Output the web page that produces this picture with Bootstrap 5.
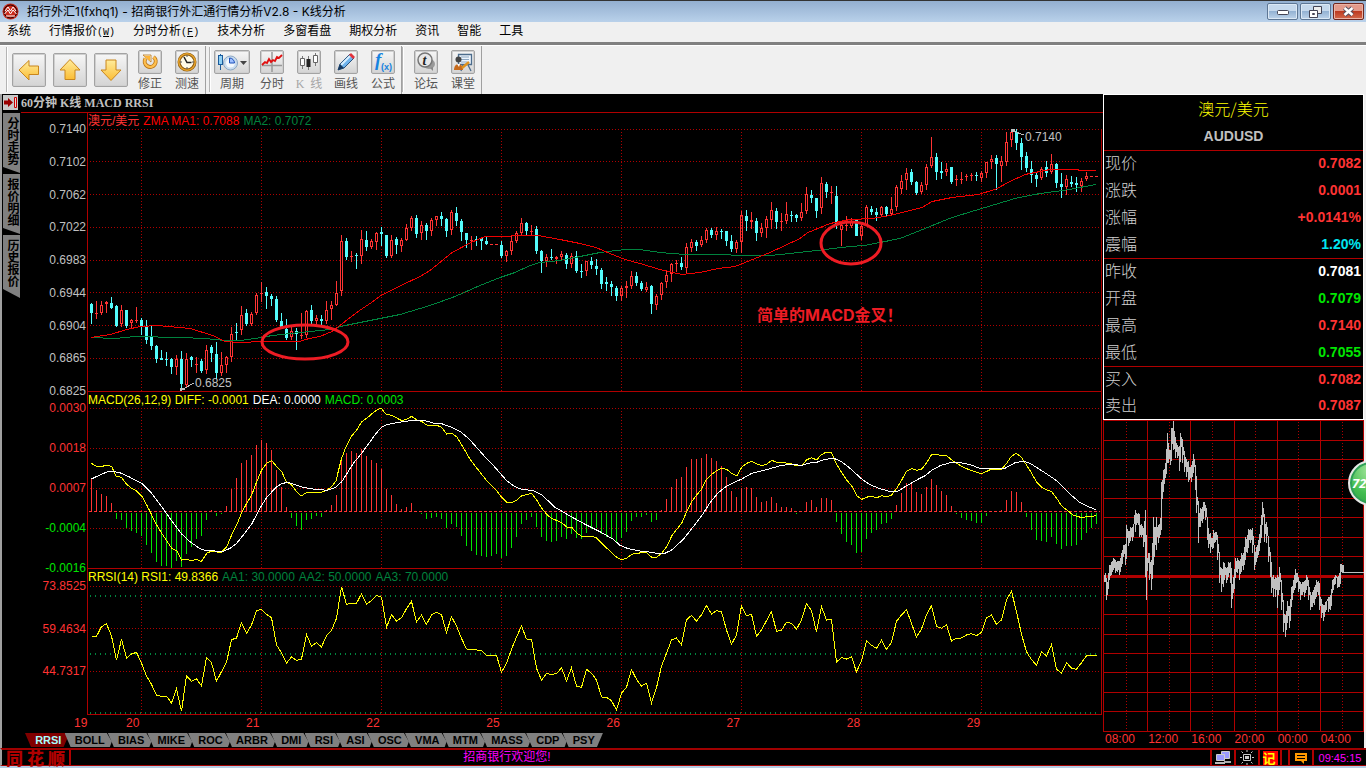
<!DOCTYPE html>
<html lang="zh-CN">
<head>
<meta charset="utf-8">
<meta name="viewport" content="width=device-width, initial-scale=1">
<title>招商银行外汇通行情分析V2.8 - K线分析</title>
<link href="https://cdn.jsdelivr.net/npm/bootstrap@5.3.0/dist/css/bootstrap.min.css" rel="stylesheet">
<style>
:root{--line:#b00000;--up:#ff3333;--down:#54fcfc;--silver:#c0c0c0}
body{height:100vh;min-height:640px;overflow:hidden;background:#f0f0f0;font:12px/14px "Liberation Sans","Noto Sans CJK SC",sans-serif;color:#000}
button{font:inherit;padding:0;border:0;background:none}
svg{display:block}
.titlebar{height:22px;padding:0 2px 0 2px;border-top:1px solid #333;background:linear-gradient(#93afd0,#b9d1ea);font-family:Inter,"Noto Sans CJK SC",sans-serif}
.winbtn{width:31px;height:17px;border:1px solid #5d7694;border-radius:2px;background:linear-gradient(#c5d8ec 45%,#94b2d3 50%,#bdd3ea);box-shadow:inset 0 0 0 1px #dbe8f5;display:grid;place-items:center}
.winclose{border-color:#70271f;background:linear-gradient(#e39a8b 45%,#bd3b22 50%,#d3694c);box-shadow:inset 0 0 0 1px #eab3a6}
.menubar{height:20px;padding-left:7px;gap:18px;line-height:18px;font-family:"Liberation Sans","Noto Sans CJK SC",sans-serif}
.menubar a{color:#000;text-decoration:none}
.hotkey{font:10px/18px "Liberation Mono",monospace}
.toolbar{height:52px;border-top:3px solid #808080;box-shadow:inset 0 1px #fff;padding-left:2px}
.tgroup{border-right:1px solid #a0a0a0;margin-top:1px}
.grip{width:2px;background:#b4b4b4;margin:1px 3px 2px 3px;border-right:1px solid #fff}
.arrows{gap:7px;margin-left:1px}
.arrowbtn{width:34px;height:34px}
.arrowbtn,.tbox{border:1px solid #a3a3a3;border-radius:2px;background:linear-gradient(#f6f6f6,#d4d4d4);box-shadow:inset 0 0 0 1px #cfcfcf;display:grid;place-items:center}
.tool{width:36px;padding-top:4px;color:#555;line-height:20px;display:flex;flex-direction:column;align-items:center}
.tbox{width:24px;height:24px}
.tbox.wide{width:36px}
.tool[disabled]{color:#a6a6a6}
.near{margin-left:1px}
.workspace{min-height:0;border-left:2px solid #a0a0a0;border-right:2px solid #f0f0f0}
.kpane{background:#000;min-width:0}
.ktitle{height:19px;padding-left:1px;gap:3px;color:var(--silver);font:bold 12px/16px "Liberation Serif","Noto Sans CJK SC",serif}
.ktitle h1{font:inherit;margin:0;border-bottom:1px solid var(--line);height:19px;line-height:18px}
.pinbtn{width:15px;height:15px;background:#c8c8c8;margin-top:1px}
.sidetabs{width:18px;padding-left:1px;gap:1px}
.vtab{width:17px;height:60px;background:#808080;color:#000;font-weight:bold;writing-mode:vertical-rl;line-height:17px;padding-top:4px;text-align:left;clip-path:polygon(0 0,100% 0,100% 100%,0 calc(100% - 6px))}
.vtab.long{height:63px;clip-path:polygon(0 0,100% 0,100% 100%,0 calc(100% - 9px))}
.axis{width:67px;padding:9px 1px 0 0;text-align:right;color:var(--silver)}
.axis>div{display:flex;flex-direction:column;justify-content:space-between;min-height:0}
.ax1{flex:276 1 0}.ax2{flex:174 1 0;margin-top:3px}.ax3{flex:99 1 0;margin-top:4px}.axpad{flex:37 1 0}
.t-red{color:var(--up)}.t-green{color:#00e600}.t-dark{color:#00833e}.t-yel{color:#ff0}.t-bright{color:#f00}
.panel1{flex:279 1 0}.panel2{flex:177 1 0}.panel3{flex:146 1 0}
.panel1,.panel2,.panel3{min-height:0}
.plot{width:100%;height:100%}
.plot *{vector-effect:non-scaling-stroke}
.legend-row{position:absolute;left:1px;top:1px;gap:4px;white-space:nowrap}
.canvas-note{position:absolute;white-space:nowrap;color:var(--silver)}
.canvas-note.big{color:#ed1c24;font:bold 16px/20px Inter,"Noto Sans CJK SC",sans-serif}
.dates{height:18px;padding-left:72px;display:grid;grid-template-columns:52px repeat(8,120fr) 16fr;color:var(--up);line-height:17px}
.indtabs{height:15px;width:573px;margin-left:23px}
.indtabs button{flex:1 0 auto;height:14px;margin-right:-5px;padding:0 7px 0 9px;background:#808080;color:#000;font:bold 11px/15px "Liberation Sans",sans-serif;clip-path:polygon(0 0,calc(100% - 6px) 0,calc(100% - 1px) 60%,calc(100% - 3px) 100%,6px 100%)}
.indtabs button.active{background:#800000;color:#a8ffff;clip-path:polygon(0 0,100% 0,calc(100% - 6px) 100%,6px 100%)}
.indtabs button:last-child{clip-path:polygon(0 0,100% 0,calc(100% - 6px) 100%,6px 100%)}
.quotepane{width:261px;background:#000}
.quote{border:1px solid #fff}
.quote caption{caption-side:top;padding:0;height:56px;border-bottom:1px solid var(--line);color:#ff0;text-align:center;font:300 16px/27px "Noto Sans CJK SC",sans-serif}
.quote caption small{display:block;color:var(--silver);font:bold 14px/28px "Liberation Sans",sans-serif}
.quote table{width:100%;border-collapse:separate;border-spacing:0}
.quote th{height:27px;padding:0 0 0 1px;vertical-align:top;font:300 16px/23px "Noto Sans CJK SC",sans-serif;color:#d0d0d0}
.quote td{padding:0 2px 0 0;vertical-align:top;text-align:right;font:bold 14px/24px "Liberation Sans",sans-serif}
.quote tbody tr:last-child>*{border-bottom:1px solid var(--line)}
.quote tbody:last-child tr>*{border:0;height:26px}
.c-cyan{color:#00e5f0}.c-white{color:#fff}
.hours{height:16px;display:grid;grid-template-columns:repeat(6,1fr);padding-left:2px;color:var(--up)}
.ball{position:absolute;top:40px;right:-30px;width:46px;height:46px;border:2px solid #e8e8e8;border-radius:50%;background:radial-gradient(circle at 50% 20%,#a9e8a0,#43bd50 60%,#2f9d45);box-shadow:inset 0 0 0 2px #2f9f58;color:#fff;font:italic bold 13px/40px "Open Sans",sans-serif;padding-left:2px;text-align:left}
.statusbar{height:18px;background:#000;border-top:2px solid #a00000;border-bottom:1px solid #a00000;border-left:2px solid #a0a0a0}
.brand{width:69px;border-right:2px solid #b00000;color:#b00000;font:900 17px/15px "Noto Sans CJK SC",sans-serif;padding:0 4px;display:flex;justify-content:space-between}
.greet{flex:872;color:#f0f;text-align:center;line-height:15px}
.spacer{flex:267}
.cell{border-left:2px solid #b00000;display:grid;place-items:center}
.w24{width:24px}.w22{width:22px}.w8{width:8px}
.clock{width:54px;color:#f0f;font-size:11px}
.memo{width:15px;height:14px;background:#f00;color:#ff0;font:bold 13px/13px "Noto Sans CJK SC",sans-serif}
.deskedge{height:2px;background:#b4cbe4}
</style>
</head>
<body class="d-flex flex-column">
<header>
  <div class="titlebar d-flex align-items-center">
    <svg width="17" height="17" viewBox="0 0 17 17"><circle cx="8.500" cy="8.500" r="8" fill="#c92a1c"/><circle cx="8.500" cy="8.500" r="6.500" fill="none" stroke="#200" stroke-width="1"/><path d="M3 8l3-4 2.500 4L11 4l3 4M2.500 11l3.500-4 2.500 4L11 7l3.500 4M4 13h9" fill="none" stroke="#fff" stroke-width="1"/></svg>
    <span class="ps-2">招行外汇1(fxhq1) - 招商银行外汇通行情分析V2.8 - K线分析</span>
    <div class="ms-auto d-flex" style="gap:2px">
      <button class="winbtn" aria-label="最小化"><svg width="12" height="6"><rect x=".5" y="1.500" width="11" height="4" rx="1" fill="#fff" stroke="#445"/></svg></button>
      <button class="winbtn" aria-label="还原"><svg width="13" height="12"><path d="M4.500.5h8v7h-8z" fill="#eee" stroke="#445"/><path d="M.5 4.500h8v7h-8z" fill="#fff" stroke="#445"/><path d="M3.500 7.500h2v1h-2z" fill="none" stroke="#445"/></svg></button>
      <button class="winbtn winclose" aria-label="关闭"><svg width="13" height="11"><path d="M2.500 2l8 7M10.500 2l-8 7" stroke="#545060" stroke-width="4.500"/><path d="M2.500 2l8 7M10.500 2l-8 7" stroke="#fff" stroke-width="2.500"/></svg></button>
    </div>
  </div>
  <nav class="menubar d-flex">
    <a href="#">系统</a><a href="#">行情报价<span class="hotkey">(<u>W</u>)</span></a><a href="#">分时分析<span class="hotkey">(<u>F</u>)</span></a><a href="#">技术分析</a><a href="#">多窗看盘</a><a href="#">期权分析</a><a href="#">资讯</a><a href="#">智能</a><a href="#">工具</a>
  </nav>
</header>
<svg width="0" height="0" class="position-absolute"><defs><linearGradient id="gold" x1="0" y1="0" x2="0" y2="1"><stop offset="0" stop-color="#ffec9c"/><stop offset="1" stop-color="#fbbd35"/></linearGradient></defs></svg>
<div class="toolbar d-flex" role="toolbar">
  <div class="tgroup d-flex">
    <div class="grip ms-1"></div>
    <div class="arrows d-flex align-items-center">
      <button class="arrowbtn" aria-label="后退"><svg width="24" height="24" viewBox="0 0 24 24"><path d="M2 12L12 2.500V8h9.500v8.500H12V22z" fill="url(#gold)" stroke="#c9861d"/></svg></button>
      <button class="arrowbtn" aria-label="向上"><svg width="24" height="24" viewBox="0 0 24 24"><path d="M12 1.500L22 12h-5v9.500H7V12H2z" fill="url(#gold)" stroke="#c9861d"/></svg></button>
      <button class="arrowbtn" aria-label="向下"><svg width="24" height="24" viewBox="0 0 24 24"><path d="M12 22.500L2 12h5V2h10v10h5z" fill="url(#gold)" stroke="#c9861d"/></svg></button>
    </div>
    <button class="tool ms-1"><span class="tbox"><svg width="18" height="18" viewBox="0 0 18 18"><path d="M4.500 5.500a5.500 5.500 0 1 0 8-1.500" fill="none" stroke="#b9761c" stroke-width="4"/><path d="M2 2h8v7z" fill="#fff3d0" stroke="#b9761c" stroke-width=".8"/><path d="M4.500 5.500a5.500 5.500 0 1 0 8-1.500" fill="none" stroke="#ffc04e" stroke-width="2.400"/><path d="M3 3h6v5z" fill="#ffb535"/></svg></span>修正</button>
    <button class="tool near"><span class="tbox"><svg width="20" height="20" viewBox="0 0 20 20"><circle cx="10" cy="10" r="8" fill="#fffbe8" stroke="#8c5a10" stroke-width="3"/><circle cx="10" cy="10" r="8.200" fill="none" stroke="#e8a52c" stroke-width="1.500"/><path d="M7 5l3 5.500h4.500" fill="none" stroke="#222" stroke-width="1.500"/><path d="M10 3v2M10 15v2M3 10h2M15 10h2" stroke="#555"/></svg></span>测速</button>
  </div>
  <div class="tgroup d-flex">
    <div class="grip"></div>
    <button class="tool"><span class="tbox wide"><svg width="32" height="20" viewBox="0 0 32 20"><path d="M4.500 2v16" stroke="#1c5c9c"/><rect x="2.500" y="3.500" width="4" height="9" fill="#8fd0f4" stroke="#1c5c9c"/><circle cx="14.500" cy="11" r="7" fill="#c9dcee" stroke="#8ba6c2"/><circle cx="14.500" cy="11" r="4.500" fill="#f3f8fd"/><path d="M13.500 11V6a5 5 0 0 1 5 5z" fill="#9ec0ff" stroke="#1d50b8"/><path d="M24 9h7l-3.500 4z" fill="#444"/></svg></span>周期</button>
    <button class="tool ms-1"><span class="tbox"><svg width="22" height="22" viewBox="0 0 22 22"><path d="M11 1v20M1 14.500h20" stroke="#999" stroke-width="1.500"/><path d="M1 14l3-3 2 1 2-4 2 3 2-2 2 1 2-4 2 1 3-3" fill="none" stroke="#e01010" stroke-width="1.800"/></svg></span>分时</button>
    <button class="tool near" disabled><span class="tbox"><svg width="20" height="20" viewBox="0 0 20 20"><path d="M3.500 4v13M9.500 4v14M16.500 1v13" stroke="#777"/><path d="M1.500 6.500h4v7h-4zM14.500 3.500h4v7h-4z" fill="#fff" stroke="#666"/><path d="M7.500 7h4v8h-4z" fill="#222"/></svg></span><span style="font-family:'Liberation Serif','Noto Sans CJK SC',serif">K&nbsp; 线</span></button>
    <button class="tool near"><span class="tbox"><svg width="20" height="20" viewBox="0 0 20 20"><path d="M2 18l2-6L14 2l4 4L8 16z" fill="#6fb4ee" stroke="#28517c"/><path d="M5 13L15 3" stroke="#d7efff" stroke-width="2"/><path d="M13 3l2-2 4 4-2 2z" fill="#e2323c"/><path d="M2 18l2-6 4 4z" fill="#16395f"/></svg></span>画线</button>
    <button class="tool near"><span class="tbox"><svg width="22" height="22" viewBox="0 0 22 22"><text x="3" y="15" font-family="Liberation Serif" font-style="italic" font-weight="bold" font-size="19" fill="#1683e0">f</text><text x="9" y="19" font-family="Liberation Sans" font-weight="bold" font-size="9" fill="#1683e0">(x)</text></svg></span>公式</button>
  </div>
  <div class="tgroup d-flex">
    <div class="grip ms-0 me-0"></div>
    <button class="tool ms-1"><span class="tbox"><svg width="20" height="20" viewBox="0 0 20 20"><ellipse cx="13" cy="12" rx="6" ry="5" fill="#999"/><path d="M14 16l3 3v-4z" fill="#888"/><circle cx="9" cy="8" r="7" fill="#e8e8e8" stroke="#777" stroke-width="1.500"/><text x="6.500" y="13" font-family="Liberation Serif" font-style="italic" font-weight="bold" font-size="14" fill="#222">t</text></svg></span>论坛</button>
    <button class="tool near"><span class="tbox"><svg width="20" height="20" viewBox="0 0 20 20"><path d="M5.500 2.500h13v10h-13zM10 13l-2 6M15 13l3 6" fill="#edf4fc" stroke="#4c6c8c" stroke-width="1.300"/><path d="M8 5h8M8 7.500h8M8 10h6" stroke="#8ca6c0"/><circle cx="5.500" cy="7.500" r="3" fill="#444"/><path d="M1 18c0-8 9-8 9 0z" fill="#c66a1c"/><path d="M4 12l2 3 1-3z" fill="#fff"/><path d="M9 16l7-6" stroke="#e0931e" stroke-width="2.500"/></svg></span>课堂</button>
  </div>
</div>

<main class="workspace d-flex flex-grow-1">
  <section class="kpane d-flex flex-column flex-grow-1">
    <div class="ktitle d-flex">
      <button class="pinbtn" aria-label="隐藏侧栏"><svg width="15" height="15" viewBox="0 0 15 15"><path d="M1 5.500h4V3l5 4.500L5 12V9.500H1z" fill="#900"/><path d="M11.500 2.500h2v10h-2z" fill="#ddd" stroke="#c00"/></svg></button>
      <h1 class="flex-grow-1">60分钟 K线 MACD RRSI</h1>
    </div>
    <div class="d-flex flex-grow-1" style="min-height:0">
      <div class="sidetabs d-flex flex-column">
        <button class="vtab">分时走势</button><button class="vtab">报价明细</button><button class="vtab long">历史报价</button>
      </div>
      <div class="axis d-flex flex-column">
        <div class="ax1"><span>0.7140</span><span>0.7102</span><span>0.7062</span><span>0.7022</span><span>0.6983</span><span>0.6944</span><span>0.6904</span><span>0.6865</span><span>0.6825</span></div>
        <div class="ax2 t-red"><span>0.0030</span><span>0.0018</span><span>0.0007</span><span class="t-green">-0.0004</span><span class="t-green">-0.0016</span></div>
        <div class="ax3 t-red"><span>73.8525</span><span>59.4634</span><span>44.7317</span></div>
        <div class="axpad"></div>
      </div>
      <div class="d-flex flex-column flex-grow-1" style="min-width:0">
        <div class="panel1 position-relative" id="candles">
          <svg class="plot" viewBox="87 113 1016 279" preserveAspectRatio="none"></svg>
          <div class="legend-row d-flex"><span class="t-red">澳元/美元</span><span class="t-bright">ZMA MA1: 0.7088</span><span class="t-dark">MA2: 0.7072</span></div>
        </div>
        <div class="panel2 position-relative" id="macd">
          <svg class="plot" viewBox="87 392 1016 177" preserveAspectRatio="none"></svg>
          <div class="legend-row d-flex t-yel"><span>MACD(26,12,9) DIFF: -0.0001</span><span class="c-white">DEA: 0.0000</span><span class="t-green">MACD: 0.0003</span></div>
        </div>
        <div class="panel3 position-relative" id="rrsi">
          <svg class="plot" viewBox="87 569 1016 146" preserveAspectRatio="none"></svg>
          <div class="legend-row d-flex t-dark"><span class="t-yel">RRSI(14) RSI1: 49.8366</span><span>AA1: 30.0000</span><span>AA2: 50.0000</span><span>AA3: 70.0000</span></div>
        </div>
      </div>
    </div>
    <div class="dates"><span>19</span><span>20</span><span>21</span><span>22</span><span>25</span><span>26</span><span>27</span><span>28</span><span>29</span></div>
    <div class="indtabs d-flex"><button class="active">RRSI</button><button>BOLL</button><button>BIAS</button><button>MIKE</button><button>ROC</button><button>ARBR</button><button>DMI</button><button>RSI</button><button>ASI</button><button>OSC</button><button>VMA</button><button>MTM</button><button>MASS</button><button>CDP</button><button>PSY</button></div>
  </section>
  <aside class="quotepane d-flex flex-column flex-shrink-0">
    <div class="quote">
      <table>
        <caption>澳元/美元<small>AUDUSD</small></caption>
        <tbody>
          <tr><th scope="row">现价</th><td class="t-red">0.7082</td></tr>
          <tr><th scope="row">涨跌</th><td class="t-red">0.0001</td></tr>
          <tr><th scope="row">涨幅</th><td class="t-red">+0.0141%</td></tr>
          <tr><th scope="row">震幅</th><td class="c-cyan">1.20%</td></tr>
        </tbody>
        <tbody>
          <tr><th scope="row">昨收</th><td class="c-white">0.7081</td></tr>
          <tr><th scope="row">开盘</th><td class="t-green">0.7079</td></tr>
          <tr><th scope="row">最高</th><td class="t-red">0.7140</td></tr>
          <tr><th scope="row">最低</th><td class="t-green">0.7055</td></tr>
        </tbody>
        <tbody>
          <tr><th scope="row">买入</th><td class="t-red">0.7082</td></tr>
          <tr><th scope="row">卖出</th><td class="t-red">0.7087</td></tr>
        </tbody>
      </table>
    </div>
    <div class="flex-grow-1 position-relative" style="min-height:0" id="intraday">
      <svg class="plot" viewBox="1103 420 261 312" preserveAspectRatio="none"></svg>
      <button class="ball">72</button>
    </div>
    <div class="hours"><span>08:00</span><span>12:00</span><span>16:00</span><span>20:00</span><span>00:00</span><span>04:00</span></div>
  </aside>
</main>

<footer>
  <div class="statusbar d-flex">
    <div class="brand"><span>同</span><span>花</span><span>顺</span></div>
    <div class="greet">招商银行欢迎您!</div>
    <div class="spacer"></div>
    <div class="cell w24"><svg width="16" height="14" viewBox="0 0 16 14"><path d="M6.500.5h8v7h-8z" fill="#99f" stroke="#ccc"/><path d="M9 10h7v2H9z" fill="#aaa"/><path d="M1.500 3.500h8v6h-8z" fill="#99f" stroke="#ccc"/><path d="M0 11h10v2H0z" fill="#bbb"/></svg></div>
    <div class="cell w24"><svg width="16" height="15" viewBox="0 0 16 15"><path d="M4.500 4.500h7v6h-7z" fill="none" stroke="#ccc"/><path d="M6 6h4v3H6z" fill="#ccc"/><path d="M8 0v2M8 13v2M1 7.500h2M13 7.500h2M2.500 1.500L4 3M13.500 1.500L12 3M2.500 13.500L4 12M13.500 13.500L12 12" stroke="#ccc"/></svg></div>
    <div class="cell w22"><span class="memo">记</span></div>
    <div class="cell w8"></div>
    <div class="cell w24"><svg width="12" height="12" viewBox="0 0 12 12"><path d="M0 1h12v8H9v3L6 9H0z" fill="#f90"/><path d="M2 3.500h8M2 6.500h8" stroke="#000"/></svg></div>
    <div class="cell clock">09:45:15</div>
  </div>
  <div class="deskedge"></div>
</footer>

<script src="https://cdn.jsdelivr.net/npm/bootstrap@5.3.0/dist/js/bootstrap.bundle.min.js"></script>
<script>
const NS = 'http://www.w3.org/2000/svg';
const X0 = 91, STEP = 5;
const svgOf = id => document.querySelector('#' + id + ' svg');
function add(svg, tag, attrs) {
  const e = document.createElementNS(NS, tag);
  for (const k in attrs) e.setAttribute(k, attrs[k]);
  svg.appendChild(e);
}
const path = (svg, d, stroke, extra) => add(svg, 'path', Object.assign({d, stroke, fill: 'none', 'shape-rendering': 'crispEdges'}, extra));
const DOT = {'stroke-dasharray': '1 2'};
const RED = '#b00000';
const nums = s => s.trim().split(/[\s,]+/).map(Number);

function frame(svg, rows, top, bottom) {
  rows.forEach(y => path(svg, `M90 ${y + .5}H1100`, RED, DOT));
  for (let x = 141; x < 1000; x += 120) path(svg, `M${x + .5} ${rows[0]}V${bottom}`, RED, DOT);
  path(svg, `M87.5 ${top}V${bottom + .5}H1101.5V${top < 129 ? 129 : top}`, RED);
}
// points are kept in thirds of a pixel, in blocks that each start with an origin
function curve(svg, blocks, stroke) {
  let d = '';
  blocks.forEach(([ox, oy, s]) => {
    const a = nums(s);
    for (let i = 0; i < a.length; i += 2) d += (d ? 'L' : 'M') + (ox + a[i] / 3).toFixed(1) + ' ' + (oy + a[i + 1] / 3).toFixed(1);
  });
  path(svg, d, stroke);
}

/* candles: direction, high, low, body top, body bottom */
const bars = `c303 324 304 313,r301 319 313 314,r301 315 305 313,r301 313 302 304,c297 309 303 308,c305 327 306 326,r305 327 310 324,c310 328 310 326,r319 328 320 323,r307 323 320 321,
c318 335 320 326,c320 344 326 340,c326 350 337 346,c345 363 346 359,c350 360 358 360,c352 366 359 360,c358 374 359 367,r355 375 359 367,c351 390 359 384,r353 387 359 385,
c356 367 357 360,r357 373 364 365,c359 373 361 371,r345 374 350 370,c345 362 347 353,c342 379 354 373,r352 376 365 373,r356 373 357 365,r327 362 334 357,c323 341 332 333,
r306 335 315 330,c309 326 313 324,r312 326 314 324,r293 315 295 313,r282 302 293 294,c287 309 292 296,c294 306 296 299,c296 322 299 320,c313 329 321 328,c319 340 329 338,
r327 340 331 337,c328 350 331 334,r313 339 335 336,r310 338 311 335,c305 324 310 321,r315 325 318 321,c315 325 319 321,r301 324 310 321,r301 320 305 309,r281 306 293 305,
r235 296 241 291,c238 260 241 257,r251 262 256 257,c253 269 255 256,r230 264 239 256,c231 251 240 247,r239 249 241 247,r232 250 233 242,c227 246 232 234,c235 258 235 256,
r235 258 240 256,c237 254 239 245,r238 252 240 246,r224 241 228 240,r216 231 218 228,c215 238 218 234,r221 240 225 233,c223 240 225 231,r218 236 220 231,r216 226 216 220,
c212 226 216 219,c218 237 219 231,r210 235 212 230,c207 226 213 221,c219 241 221 232,c233 248 233 240,r236 250 240 241,c236 246 239 240,c237 250 238 241,c236 245 241 244,
r244 245 244 245,r244 245 244 245,c241 258 245 256,r250 262 251 256,r236 255 241 251,r231 243 233 241,r218 235 223 233,c222 236 223 231,r225 236 231 232,c226 254 229 251,
c250 273 251 261,r254 267 257 261,c249 260 257 258,r256 264 257 259,r251 261 254 257,c253 269 255 264,r253 268 256 264,c251 273 256 271,c264 278 271 272,r261 276 261 271,
c257 269 261 265,c259 275 266 269,c268 289 270 284,c277 291 282 284,c281 296 284 287,c286 301 288 296,r286 301 288 296,r281 298 286 288,r271 289 276 286,c272 286 276 283,
c281 291 283 289,r282 292 287 290,c285 314 286 304,r294 310 296 305,r282 300 283 295,r271 288 275 282,r263 282 264 274,r260 272 263 264,c257 270 263 267,r243 273 247 268,
r239 252 242 248,c240 251 242 246,r236 247 240 245,r228 243 230 240,c228 238 230 235,r227 240 231 235,c229 239 231 232,c231 246 231 241,c235 252 241 249,r240 253 242 249,
r211 253 215 242,c210 231 216 221,r212 229 220 222,c218 241 221 233,r223 237 228 233,r216 238 219 228,r202 229 210 220,c208 229 211 222,r213 231 221 222,r202 224 214 221,
c211 222 215 216,c214 222 215 218,r203 221 212 218,r187 214 194 211,c190 203 195 198,c198 218 198 211,r177 214 183 208,c182 198 184 192,r186 204 192 193,c186 229 196 225,
r222 246 225 230,r216 231 225 226,r218 228 221 226,c220 236 220 236,r223 240 226 236,r205 226 207 225,c206 215 209 212,c208 221 212 215,r206 217 207 215,c206 216 207 214,
r197 215 209 214,r185 211 187 207,r175 194 181 189,r168 190 173 180,c169 185 172 182,c181 195 182 193,r182 194 185 192,r164 190 167 185,r137 168 157 166,c153 180 157 172,
c162 179 171 173,r163 176 169 172,c167 184 167 182,r175 186 179 180,r172 184 179 180,r174 181 176 177,r173 181 175 176,c172 181 175 176,r171 182 173 178,r162 178 162 173,
r155 169 159 162,c155 190 158 164,r156 182 161 166,r132 166 142 162,r130 147 132 140,c129 150 132 143,c138 170 143 157,c152 172 156 168,c161 183 169 175,c172 187 175 179,
r167 180 169 178,c161 177 167 173,r154 174 164 172,c163 188 164 183,c173 198 184 187,r175 195 179 187,c176 187 182 184,c177 192 183 185,r178 192 181 186,r172 181 176 179,r176 177 176 177,r176 177 176 177`.split(',');

const kc = svgOf('candles');
frame(kc, [129, 161, 194, 227, 260, 292, 325, 358], 113, 391);
bars.forEach((s, i) => {
  s = s.trim();
  const up = s[0] === 'r', [h, l, t, b] = nums(s.slice(1)), x = X0 + STEP * i, col = up ? '#ff3333' : '#54fcfc';
  if (b - t <= 1) {
    path(kc, `M${x + .5} ${h}V${l}M${x - 1} ${t + .5}H${x + 2}`, col);
  } else if (up) {
    path(kc, `M${x + .5} ${h}V${t}M${x + .5} ${b}V${l}M${x - .5} ${t + .5}H${x + 1.5}V${b - .5}H${x - .5}Z`, col);
  } else {
    path(kc, `M${x + .5} ${h}V${l}`, col);
    add(kc, 'rect', {x: x - 1, y: t, width: 3, height: b - t, fill: col, 'shape-rendering': 'crispEdges'});
  }
});
const poly = (svg, s, stroke) => { const a = nums(s); let d = ''; for (let i = 0; i < a.length; i += 2) d += (i ? 'L' : 'M') + a[i] + ' ' + (a[i + 1] + .5); path(svg, d, stroke); };
poly(kc, '91 337 115 338 135 336 180 337 205 338 225 340 240 340 262 337 272 335 300 332 330 329 345 325 370 320 400 314 430 305 455 296 480 285 500 277 515 272 530 265 540 262 560 260 580 256 600 252 625 249 640 249 660 252 685 254 727 254 735 255 770 255 790 253 825 249 850 246 865 245 885 241 900 238 925 228 952 217 985 207 1015 198 1040 193 1070 189 1085 186 1096 184', '#00833e');
poly(kc, '91 337 110 334 127 329 140 326 158 325 190 328 213 335 225 341 240 342 262 341 300 341 305 339 320 336 332 331 345 321 358 311 370 303 381 295 401 285 420 276 430 270 452 252 471 242 485 236 505 236 517 235 538 235 560 239 580 243 596 247 610 253 625 259 640 263 660 269 682 274 700 272 718 268 735 266 750 260 770 252 785 245 800 238 808 232 830 223 850 219 872 218 890 215 910 210 922 207 932 201 952 197 978 194 995 189 1010 181 1025 174 1050 169 1077 169 1080 170 1096 170', '#f00000');
path(kc, 'M1013 131L1024 135M183 389L194 383', '#c0c0c0');
path(kc, 'M1011 130h4M1011 131h3M181 388v3M182 389h3', '#c0c0c0', {'stroke-width': 2});
[[305, 342, 43, 17], [851, 243, 30, 21]].forEach(([cx, cy, rx, ry]) => add(kc, 'ellipse', {cx, cy, rx, ry, fill: 'none', stroke: '#ed1c24', 'stroke-width': 3}));
[['0.7140', 1025, 130, ''], ['0.6825', 195, 376, ''], ['简单的MACD金叉！', 757, 305, 'big']].forEach(([t, x, y, c]) => {
  const n = document.createElement('span');
  n.className = 'canvas-note ' + c; n.textContent = t;
  n.style.left = (x - 87) / 10.16 + '%'; n.style.top = (y - 113) / 2.79 + '%';
  document.getElementById('candles').appendChild(n);
});

/* MACD */
const mc = svgOf('macd');
frame(mc, [408, 448, 488, 528], 392, 568);
path(mc, 'M89 511.5H1100', '#ff3333', {'stroke-dasharray': '3 2'});
const hist = nums(`267 300 312 318 339 386 389 413 422 428 437 464 488 515 527 527 533 512 530 491 470 446 437 389 361 377 369 348 297 264
220 210 195 165 150 159 180 240 292 351 383 407 419 389 386 377 380 361 345 315 214 189 183 189 178 198 210 219 237 297 315 342 358 351 339 365
369 386 383 380 386 413 401 410 437 467 482 494 497 500 497 491 503 497 473 440 401 389 380 410 440 452 455 452 440 446 431 443 446 428 416 413 431 440 443
455 443 425 392 380 380 374 395 389 361 327 291 267 261 231 207 207 204 192 204 213 228 261 303 321 294 291 294 321 336 333 321 339 351 351 354
369 365 336 330 351 324 324 330 395 431 455 464 488 485 446 428 419 401 398 386 345 309 279 282 306 312 291 267 285 303 315 348
369 383 389 392 398 398 377 365 365 361 330 303 306 336 380 419 449 452 455 440 461 476 467 467 464 449 428 413 401`);
hist.forEach((v, i) => {
  if (v === 365) return;
  const x = X0 + STEP * i + .5, y = Math.round(390 + v / 3);
  path(mc, v < 365 ? `M${x} ${y}V512` : `M${x} 513V${Math.max(y, 514)}`, v < 365 ? '#ff3333' : '#00e600');
});
curve(mc, [[80, 390, '34 220 50 229 68 229 80 225 95 230 108 258 124 262 140 283 155 295 168 302 185 318 200 345 215 375 228 402 245 430 260 452 275 475 290 482 305 510 318 508 335 512 350 508 364 515 380 490 395 483 410 486 425 486 440 470 455 435 470 405 485 368 500 340 515 315 530 275 545 240 560 220 575 212 590 230 605 245 620 277 635 285 650 305 664 318 680 307 725 307 740 300 755 290 768 272 784 208 798 170 815 138 830 120 845 95 860 85 875 72 890 60 902 55 906 57 917 72 935 76 950 84 965 92 980 88 995 79 1010 90 1025 94 1040 105 1070 106 1085 112 1100 132 1115 130 1130 140 1145 165 1160 190'],
 [470, 390, '0 208 25 240 50 272 78 300 95 322 110 337 125 338 138 332 155 317 185 310 200 330 215 355 232 375 245 385 275 398 290 411 305 412 322 430 335 439 360 439 378 442 395 460 425 488 440 502 455 509 470 504 485 493 500 490 528 487 545 502 560 502 575 490 590 470 605 438 620 418 635 400 650 365 665 335 680 315 695 297 708 270 725 253 740 242 755 235 770 238 785 250 800 258 815 232 830 220 845 214 860 222 875 227 890 222 905 211 920 217'],
 [790, 390, '0 220 15 226 38 225 50 209 65 203 80 210 92 195 108 187 124 187 138 220 155 248 170 270 188 292 200 317 215 328 240 318 260 323 275 317 290 320 305 315 320 295 335 270 350 243 365 236 380 241 395 237 410 218 425 193 470 197 485 210 500 220 520 232 545 242 575 251 605 237 635 237 650 220 663 200 678 190 693 200 710 226 725 250 740 277 755 292 770 300 785 305 800 325 815 348 830 360 850 375 875 383 890 380 905 380 918 376']], '#ffff00');
curve(mc, [[80, 390, '34 267 60 255 80 246 100 244 125 250 150 262 185 280 215 310 245 350 275 392 305 432 330 455 360 476 380 482 430 484 450 475 470 460 490 435 515 402 540 355 560 322 590 290 605 281 622 277 640 282 665 291 690 296 740 301 765 293 785 275 800 252 820 220 845 190 870 155 890 128 905 112 920 104 950 98 990 92 1030 91 1060 99 1085 101 1110 110 1140 124 1166 146'],
 [470, 390, '0 150 40 195 75 232 110 272 135 290 155 298 190 302 215 314 255 352 300 378 345 403 390 425 430 448 450 466 475 476 510 483 545 487 565 491 585 490 605 480 640 448 670 410 700 370 720 338 745 308 770 288 815 267 845 250 890 239 930 227'],
 [790, 390, '0 223 35 226 60 219 80 217 100 210 130 204 155 215 180 235 215 267 240 284 270 296 305 306 325 303 350 287 380 270 405 257 425 241 450 227 485 217 515 219 540 224 570 235 645 235 675 218 700 214 720 220 760 245 800 272 840 312 870 338 900 352 918 359']], '#ffffff');

/* RRSI */
const rc = svgOf('rrsi');
frame(rc, [586, 628, 671], 569, 714);
[595, 653, 712].forEach(y => path(rc, `M90 ${y + 1}H1098`, '#00833e', {'stroke-dasharray': '1 4', 'stroke-width': 2}));
const rsi = nums(`739 739 710 701 738 811 748 804 792 787 820 858 883 916 919 919 939 896 964 857 874 866 888 803 818 874 845 817 749 744 698 730 705 662 658 673 683 765 788 819
801 811 807 734 768 758 771 737 721 685 590 643 640 640 611 642 632 616 622 712 674 693 683 656 634 696 676 703 675 667 674 727 680 708 745 777 778 780 782 796
796 796 847 820 778 741 708 747 748 835 870 851 853 851 833 873 833 888 892 838 850 870 921 922 932 960 910 892 839 868 888 880 939 893 828 790 750 744 765 690
676 694 674 647 672 662 665 720 763 735 647 677 673 739 720 692 665 724 720 697 700 718 690 641 662 726 650 690 688 816 803 807 800 846 812 752 766 775 751 778
757 694 675 659 700 741 717 675 647 709 715 704 753 745 744 735 731 737 727 684 675 703 690 630 604 665 733 785 809 825 785 798 764 837 850 818 834 838 818 797 797 797`);
path(rc, 'M' + rsi.map((v, i) => (X0 + .5 + STEP * i) + ' ' + (390 + v / 3).toFixed(1)).join('L'), '#ffff00');

/* intraday line: x, high, low */
const ic = svgOf('intraday');
[420, 440, 459, 479, 498, 517, 537, 556, 595, 614, 634, 653, 672, 692, 711, 731].forEach(y => path(ic, `M1103 ${y + .5}H1364`, RED));
path(ic, 'M1103 576.5H1364', RED, {'stroke-width': 3});
[1103, 1147, 1190, 1234, 1277, 1320, 1363].forEach(x => path(ic, `M${x + .5} 420V732`, RED));
[1126, 1169, 1212, 1255, 1298, 1342].forEach(x => path(ic, `M${x + .5} 422V731`, RED, DOT));
const env = nums(`25 495 515 30 520 570 34 515 540 38 465 510 44 455 495 50 445 480 56 455 490 62 455 485 70 455 495 76 430 470 82 405 440 86 405 465 91 345 400 97 370 408 103 350 392 108 350 392 116 300 365 120 310 345 125 310 345 130 345 382 136 345 382 142 360 410 147 300 500 151 375 570 156 430 460 159 450 510 165 450 540 170 320 465 175 350 440 180 320 420 186 345 400 191 325 375 196 215 300 201 180 245 206 160 205 212 70 160 217 110 160 221 120 165 226 55 125 230 33 120 234 75 118 238 85 145 243 110 145 248 110 182 253 70 130 258 90 160 264 135 185 270 150 200 275 155 215 280 175 210 285 165 215 290 132 190 296 185 240 301 240 310 307 285 398 312 295 350 317 290 340 322 275 310 327 290 330 332 345 390 336 370 415 341 370 430 347 385 418 352 360 415 358 365 395 363 385 450 369 450 520 375 480 545 380 455 530 385 460 510 390 480 520 396 455 500 401 455 520 405 520 593 411 500 550 416 445 505 422 445 490 428 455 510 434 430 485 440 430 480 446 380 450 452 375 430 457 358 400 463 358 400 468 355 430 473 430 480 480 410 455 487 390 435 493 345 400 499 275 345 504 330 395 509 335 400 515 400 455 521 440 500 526 495 550 532 495 560 538 500 560 544 495 595 550 470 540 556 530 600 561 590 665 566 620 680 572 572 640 578 590 655 584 530 590 590 510 550 596 478 535 601 490 520 607 510 545 613 520 570 619 515 555 625 515 560 631 495 540 637 520 570 642 560 600 648 545 590 655 530 585 660 510 560 665 515 555 670 555 600 675 570 625 682 590 632 688 575 605 695 565 605 702 555 600 708 510 550 715 500 525 722 505 535 728 490 530 733 462 490 737 470 488 740 487 487 800 487 487`);
let d = '';
for (let i = 0; i < env.length; i += 3) {
  const x = 1096.5 + Math.round(env[i] / 3), t = 410 + env[i + 1] / 3, b = 410 + env[i + 2] / 3, m = (t + b) / 2;
  d += (d ? 'L' : 'M') + `${x} ${t.toFixed(1)}V${b.toFixed(1)}`;
  if (i < env.length - 6) d += `V${(m + 3).toFixed(1)}H${x + 1}V${(m - 5).toFixed(1)}`;
}
path(ic, d, '#c0c0c0');
</script>
</body>
</html>
